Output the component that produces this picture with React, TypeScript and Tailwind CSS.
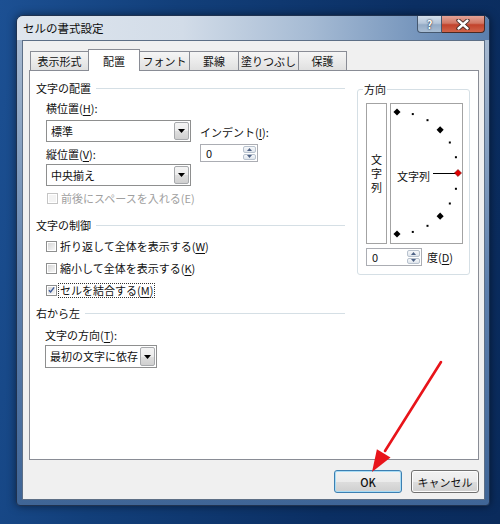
import type { FC, ReactNode } from "react"

const Key: FC<{ children: ReactNode }> = ({ children }) => (
  <span className="underline underline-offset-[2px] decoration-1">{children}</span>
)

const DropButton: FC = () => (
  <div className="w-[15px] m-px border border-[#a7a9ac] rounded-[2px] bg-[linear-gradient(180deg,#f4f4f4_0%,#ececec_50%,#dedede_51%,#d0d0d0_100%)] flex items-center justify-center">
    <svg width="7" height="4" viewBox="0 0 7 4">
      <path d="M0 0h7L3.5 4z" fill="#000" />
    </svg>
  </div>
)

const Select: FC<{ value: string; w: string }> = ({ value, w }) => (
  <div className={`flex h-[22px] border border-[#8e8f8f] bg-white ${w}`}>
    <span className="flex-1 pl-[4px] leading-[20px] text-[#111]">{value}</span>
    <DropButton />
  </div>
)

const SpinBtn: FC<{ up?: boolean }> = ({ up }) => (
  <div className="flex-1 rounded-[2px] border border-[#b8c2ce] bg-[linear-gradient(180deg,#f6f8fa_0%,#dfe5ec_100%)] flex items-center justify-center">
    <svg width="5" height="3" viewBox="0 0 5 3">
      <path d={up ? "M0 3h5L2.5 0z" : "M0 0h5L2.5 3z"} fill="#4d6185" />
    </svg>
  </div>
)

const Spin: FC<{ w: string }> = ({ w }) => (
  <div className={`flex h-[18px] border border-[#abadb3] bg-white ${w}`}>
    <span className="flex-1 pl-[5px] leading-[16px] text-[#111]">0</span>
    <div className="flex flex-col w-[13px] m-px gap-px">
      <SpinBtn up />
      <SpinBtn />
    </div>
  </div>
)

interface CheckProps {
  label: ReactNode
  checked?: boolean
  disabled?: boolean
  focus?: boolean
  className?: string
}

const Check: FC<CheckProps> = ({ label, checked, disabled, focus, className }) => (
  <div className={`flex items-center h-[14px] ml-[10px] ${className ?? ""}`}>
    <div className={`w-[11px] h-[11px] border p-px bg-white ${disabled ? "border-[#c5c5c5]" : "border-[#8e8f8f]"}`}>
      <div
        className={`w-full h-full flex items-center justify-center ${disabled ? "bg-[#f4f4f4]" : "bg-[linear-gradient(135deg,#d8d8d8_0%,#f6f6f6_100%)]"}`}
      >
        {checked && (
          <svg width="8" height="8" viewBox="0 0 8 8">
            <path d="M1 4.2 L3 6.3 L7 1" stroke="#3c5a9a" strokeWidth="1.6" fill="none" />
          </svg>
        )}
      </div>
    </div>
    {focus ? (
      <span className="ml-[1px] px-[1px] border border-dotted border-[#333] leading-[13px]">{label}</span>
    ) : (
      <span className={`ml-[3px] ${disabled ? "text-[#a0a0a0]" : ""}`}>{label}</span>
    )}
  </div>
)

const Header: FC<{ children: ReactNode; className?: string }> = ({ children, className }) => (
  <div className={`flex items-center h-[14px] ${className ?? ""}`}>
    <span>{children}</span>
    <div className="flex-1 h-px bg-[#d5dfe5] ml-[5px]" />
  </div>
)

const tabs = [
  { label: "表示形式", w: "w-[59px]" },
  { label: "配置", w: "w-[52px]", active: true },
  { label: "フォント", w: "w-[51px]" },
  { label: "罫線", w: "w-[50px]" },
  { label: "塗りつぶし", w: "w-[61px]" },
  { label: "保護", w: "w-[49px]" },
]

// dial dots, every 15 degrees on a half circle
const dots = Array.from({ length: 13 }, (_, i) => {
  const deg = 90 - i * 15
  const rad = (deg * Math.PI) / 180
  return { deg, x: 6 + 61 * Math.cos(rad), y: 69 - 61 * Math.sin(rad) }
})

const Dial: FC = () => (
  <div className="relative w-[73px] h-[141px] border border-[#a3a3a3] bg-white flex items-center pl-[6px] pt-[5px]">
    <span className="leading-[14px]">文字列</span>
    <svg className="absolute left-0 top-0" width="71" height="139" viewBox="0 0 71 139">
      <line x1="42" y1="69.5" x2="65" y2="69.5" stroke="#000" strokeWidth="1" />
      {dots.map((d) => {
        if (d.deg === 0)
          return (
            <rect key={d.deg} x={d.x - 2.5} y={d.y - 2.5} width="5" height="5" fill="#e00000" stroke="#600" strokeWidth="0.5" transform={`rotate(45 ${d.x} ${d.y})`} />
          )
        if (Math.abs(d.deg) % 45 === 0)
          return <rect key={d.deg} x={d.x - 2.5} y={d.y - 2.5} width="5" height="5" fill="#000" transform={`rotate(45 ${d.x} ${d.y})`} />
        return <rect key={d.deg} x={d.x - 1} y={d.y - 1} width="2" height="2" fill="#000" />
      })}
    </svg>
  </div>
)

const Button: FC<{ children: ReactNode; primary?: boolean }> = ({ children, primary }) => (
  <div
    className={`w-[68px] h-[23px] rounded-[3px] border flex items-center justify-center ${
      primary
        ? "border-[#3c7fb1] shadow-[inset_0_0_0_1px_#a8dcf5] bg-[linear-gradient(180deg,#f2f2f2_0%,#ebebeb_50%,#dddddd_51%,#cfcfcf_100%)]"
        : "border-[#707070] shadow-[inset_0_0_0_1px_#fcfcfc] bg-[linear-gradient(180deg,#f2f2f2_0%,#ebebeb_50%,#dddddd_51%,#cfcfcf_100%)]"
    }`}
  >
    <span className={`leading-[14px] text-[#111] ${primary ? "font-medium" : ""}`}>{children}</span>
  </div>
)

export default function App() {
  return (
    <div className="relative w-[500px] h-[524px] overflow-hidden pt-[15px] pl-[16px] bg-[linear-gradient(100deg,#1c5093_0%,#123f7a_30%,#0b2f63_70%,#0a2b5c_100%)] font-['Noto_Sans_CJK_JP',sans-serif] text-[11px] text-[#111]">
      {/* window */}
      <div className="w-[474px] h-[491px] flex flex-col rounded-t-[7px] rounded-b-[4px] border border-[#1f3250] shadow-[0_0_8px_rgba(0,0,0,0.5)] bg-[linear-gradient(180deg,#aebfd4_0%,#8aa3c2_25%,#5e80ad_55%,#3f6596_100%)]">
        {/* title bar */}
        <div className="h-[24px] flex items-start rounded-t-[6px] bg-[linear-gradient(90deg,#dfe6ee_0%,#d2dce8_35%,#a6bbd4_62%,#6f90b9_88%,#5b7fad_100%)]">
          <span className="pl-[6px] pt-[5px] leading-[14px] text-[11.5px] text-[#0d0d0d]">セルの書式設定</span>
          <div className="ml-auto mr-[4px] flex">
            <div className="w-[25px] h-[17px] rounded-bl-[4px] border border-t-0 border-[#45586f] bg-[linear-gradient(180deg,#d4dfeb_0%,#b5c6da_45%,#94abc6_55%,#a9bdd4_100%)] flex items-center justify-center">
              <span className="text-[11px] font-bold leading-[12px] text-white [text-shadow:0_0_2px_#233448,0_0_1px_#233448]">?</span>
            </div>
            <div className="w-[43px] h-[17px] rounded-br-[4px] border border-l-0 border-t-0 border-[#4a2a24] bg-[linear-gradient(180deg,#e4a396_0%,#d17764_45%,#c2432c_55%,#d0644a_100%)] flex items-center justify-center">
              <svg width="14" height="11" viewBox="0 0 14 11">
                <path d="M2.5 1.5 L11.5 9.5 M11.5 1.5 L2.5 9.5" stroke="#3b2420" strokeWidth="4.2" strokeLinecap="round" />
                <path d="M2.5 1.5 L11.5 9.5 M11.5 1.5 L2.5 9.5" stroke="#fff" strokeWidth="2.4" strokeLinecap="round" />
              </svg>
            </div>
          </div>
        </div>

        {/* client area */}
        <div className="ml-[5px] w-[463px] h-[460px] border border-[#5d6f86] bg-[#f0f0f0] flex flex-col">
          <div className="h-[29px] flex items-end pl-[7px]">
            {tabs.map((t, i) => (
              <div
                key={t.label}
                className={`${t.w} ${i > 0 ? "-ml-px" : ""} border border-b-0 border-[#898c95] flex items-center justify-center ${
                  t.active ? "relative z-10 h-[22px] -mb-px bg-white" : "h-[19px] bg-[linear-gradient(180deg,#f5f5f5_0%,#ebebeb_50%,#e0e0e0_100%)]"
                }`}
              >
                <span className="leading-[14px]">{t.label}</span>
              </div>
            ))}
          </div>

          {/* tab page */}
          <div className="ml-[6px] w-[450px] h-[390px] border border-[#898c95] bg-white flex">
            <div className="ml-[6px] w-[309px] pt-[10px] flex flex-col">
              <Header>文字の配置</Header>
              <div className="flex ml-[10px] mt-[6px]">
                <div className="flex flex-col">
                  <span className="leading-[14px]">
                    横位置(<Key>H</Key>):
                  </span>
                  <Select value="標準" w="w-[145px] mt-[5px]" />
                  <span className="leading-[14px] mt-[5px]">
                    縦位置(<Key>V</Key>):
                  </span>
                  <Select value="中央揃え" w="w-[145px] mt-[3px]" />
                </div>
                <div className="flex flex-col ml-[9px] pt-[24px]">
                  <span className="leading-[14px]">
                    インデント(<Key>I</Key>):
                  </span>
                  <Spin w="w-[58px] mt-[5px]" />
                </div>
              </div>
              <Check disabled label="前後にスペースを入れる(E)" className="mt-[5px] ml-[11px]" />

              <Header className="mt-[13px]">文字の制御</Header>
              <Check
                className="mt-[7px]"
                label={
                  <>
                    折り返して全体を表示する(<Key>W</Key>)
                  </>
                }
              />
              <Check
                className="mt-[8px]"
                label={
                  <>
                    縮小して全体を表示する(<Key>K</Key>)
                  </>
                }
              />
              <Check
                className="mt-[8px]"
                checked
                focus
                label={
                  <>
                    セルを結合する(<Key>M</Key>)
                  </>
                }
              />

              <Header className="mt-[9px]">右から左</Header>
              <span className="ml-[9px] mt-[8px] leading-[14px]">
                文字の方向(<Key>T</Key>):
              </span>
              <Select value="最初の文字に依存" w="ml-[9px] mt-[3px] w-[112px] h-[23px]" />
            </div>

            {/* orientation */}
            <fieldset className="ml-[12px] mt-[11px] w-[113px] self-start border border-[#d5dfe5] rounded-[3px] pl-[8px] pt-[7px] pb-[8px]">
              <legend className="ml-[-3px] px-[1px] leading-[14px]">方向</legend>
              <div className="flex gap-[3px]">
                <div className="w-[21px] h-[141px] border border-[#a3a3a3] bg-white flex items-center justify-center pt-[3px]">
                  <span className="[writing-mode:vertical-rl] tracking-[3px] leading-[14px]">文字列</span>
                </div>
                <Dial />
              </div>
              <div className="flex items-center mt-[4px]">
                <Spin w="w-[56px]" />
                <span className="ml-[5px] leading-[14px]">
                  度(<Key>D</Key>)
                </span>
              </div>
            </fieldset>
          </div>

          <div className="mt-[10px] flex justify-end gap-[9px] pr-[5px]">
            <Button primary>OK</Button>
            <Button>キャンセル</Button>
          </div>
        </div>
      </div>

      {/* red arrow */}
      <svg className="absolute left-0 top-0 pointer-events-none" width="500" height="524" viewBox="0 0 500 524">
        <line x1="441" y1="362" x2="385" y2="451" stroke="#e8141a" strokeWidth="2.6" strokeLinecap="round" />
        <polygon points="372,472 390.5,457.6 376.9,449.2" fill="#e8141a" />
      </svg>
    </div>
  )
}
